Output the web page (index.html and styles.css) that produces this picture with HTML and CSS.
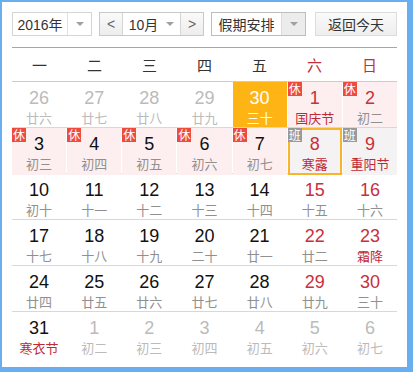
FILE: index.html
```html
<!DOCTYPE html>
<html lang="zh">
<head>
<meta charset="utf-8">
<link rel="stylesheet" href="styles.css">
</head>
<body>
<div class="cal">
  <div class="toolbar">
    <div class="sel year"><span class="sel-text">2016年</span><span class="sel-arrow"><i class="tri"></i></span></div>
    <div class="month">
      <span class="nav">&lt;</span>
      <span class="month-text">10月<i class="tri"></i></span>
      <span class="nav">&gt;</span>
    </div>
    <div class="sel holiday"><span class="sel-text">假期安排</span><span class="sel-arrow gray"><i class="tri"></i></span></div>
    <div class="today-btn">返回今天</div>
  </div>
  <div class="weekdays">
    <span>一</span><span>二</span><span>三</span><span>四</span><span>五</span><span class="we">六</span><span class="we">日</span>
  </div>
  <div class="grid">
    <div class="row">
      <div class="cell other"><b>26</b><small>廿六</small></div>
      <div class="cell other"><b>27</b><small>廿七</small></div>
      <div class="cell other"><b>28</b><small>廿八</small></div>
      <div class="cell other"><b>29</b><small>廿九</small></div>
      <div class="cell today"><b>30</b><small>三十</small></div>
      <div class="cell rest red"><i class="badge">休</i><b>1</b><small class="fest">国庆节</small></div>
      <div class="cell rest red"><i class="badge">休</i><b>2</b><small>初二</small></div>
    </div>
    <div class="row">
      <div class="cell rest"><i class="badge">休</i><b>3</b><small>初三</small></div>
      <div class="cell rest"><i class="badge">休</i><b>4</b><small>初四</small></div>
      <div class="cell rest"><i class="badge">休</i><b>5</b><small>初五</small></div>
      <div class="cell rest"><i class="badge">休</i><b>6</b><small>初六</small></div>
      <div class="cell rest"><i class="badge">休</i><b>7</b><small>初七</small></div>
      <div class="cell work red selected"><i class="badge">班</i><b>8</b><small class="fest">寒露</small></div>
      <div class="cell work red"><i class="badge">班</i><b>9</b><small class="fest">重阳节</small></div>
    </div>
    <div class="row">
      <div class="cell"><b>10</b><small>初十</small></div>
      <div class="cell"><b>11</b><small>十一</small></div>
      <div class="cell"><b>12</b><small>十二</small></div>
      <div class="cell"><b>13</b><small>十三</small></div>
      <div class="cell"><b>14</b><small>十四</small></div>
      <div class="cell red"><b>15</b><small>十五</small></div>
      <div class="cell red"><b>16</b><small>十六</small></div>
    </div>
    <div class="row">
      <div class="cell"><b>17</b><small>十七</small></div>
      <div class="cell"><b>18</b><small>十八</small></div>
      <div class="cell"><b>19</b><small>十九</small></div>
      <div class="cell"><b>20</b><small>二十</small></div>
      <div class="cell"><b>21</b><small>廿一</small></div>
      <div class="cell red"><b>22</b><small>廿二</small></div>
      <div class="cell red"><b>23</b><small class="fest">霜降</small></div>
    </div>
    <div class="row">
      <div class="cell"><b>24</b><small>廿四</small></div>
      <div class="cell"><b>25</b><small>廿五</small></div>
      <div class="cell"><b>26</b><small>廿六</small></div>
      <div class="cell"><b>27</b><small>廿七</small></div>
      <div class="cell"><b>28</b><small>廿八</small></div>
      <div class="cell red"><b>29</b><small>廿九</small></div>
      <div class="cell red"><b>30</b><small>三十</small></div>
    </div>
    <div class="row last">
      <div class="cell"><b>31</b><small class="fest">寒衣节</small></div>
      <div class="cell other"><b>1</b><small>初二</small></div>
      <div class="cell other"><b>2</b><small>初三</small></div>
      <div class="cell other"><b>3</b><small>初四</small></div>
      <div class="cell other"><b>4</b><small>初五</small></div>
      <div class="cell other"><b>5</b><small>初六</small></div>
      <div class="cell other"><b>6</b><small>初七</small></div>
    </div>
  </div>
</div>
</body>
</html>
```

FILE: styles.css
```css
html, body {
  margin: 0;
  padding: 0;
  background: #6aaef2;
  height: 372px;
  overflow: hidden;
}
.cal {
  box-sizing: border-box;
  margin: 2px 0 0 2px;
  width: 405px;
  height: 365px;
  background: #fff;
  padding: 10px;
  font-family: "Liberation Sans", "Noto Sans CJK SC", sans-serif;
  color: #000;
}
.toolbar {
  display: flex;
  height: 24px;
  font-family: "Liberation Sans", "Noto Sans CJK SC", sans-serif;
  font-size: 14px;
  color: #333;
}
.sel {
  box-sizing: border-box;
  display: flex;
  border: 1px solid #d5d5d5;
  background: #fff;
  height: 24px;
}
.sel-text {
  display: flex;
  align-items: center;
  justify-content: center;
  border-right: 1px solid #e2e2e2;
}
.sel-arrow {
  flex: 1;
  display: flex;
  align-items: center;
  justify-content: center;
}
.sel-arrow.gray {
  background: #ececec;
}
.tri {
  display: inline-block;
  width: 0;
  height: 0;
  border-left: 4px solid transparent;
  border-right: 4px solid transparent;
  border-top: 4px solid #a0a0a0;
}
.year {
  width: 80px;
}
.year .sel-text {
  width: 54px;
}
.month {
  box-sizing: border-box;
  margin-left: 7px;
  width: 105px;
  height: 24px;
  display: flex;
  border: 1px solid #c8c8c8;
}
.nav {
  width: 22px;
  display: flex;
  align-items: center;
  justify-content: center;
  background: linear-gradient(#fafafa, #ededed);
  color: #666;
  font-size: 14px;
}
.month-text {
  flex: 1;
  display: flex;
  align-items: center;
  justify-content: center;
  gap: 8px;
  border-left: 1px solid #d5d5d5;
  border-right: 1px solid #d5d5d5;
  background: #fff;
}
.holiday {
  margin-left: 7px;
  width: 95px;
  border-color: #bdbdbd;
}
.holiday .sel-text {
  width: 69px;
  border-right: 1px solid #dcdcdc;
}
.today-btn {
  box-sizing: border-box;
  margin-left: 9px;
  width: 82px;
  height: 24px;
  border: 1px solid #dcdcdc;
  background: linear-gradient(#fafafa, #eeeeee);
  display: flex;
  align-items: center;
  justify-content: center;
}
.weekdays {
  margin-top: 11px;
  border-top: 1px solid #74b2ea;
  border-bottom: 1px solid #cccccc;
  height: 33px;
  display: grid;
  grid-template-columns: repeat(7, 1fr);
  align-items: center;
  text-align: center;
  font-family: "Noto Sans CJK SC", sans-serif;
  font-size: 15px;
  color: #333;
}
.weekdays .we {
  color: #c2303a;
}
.row {
  display: grid;
  grid-template-columns: repeat(7, 1fr);
  column-gap: 1px;
  height: 45px;
  border-bottom: 1px solid #d8d8d8;
}
.row.last {
  border-bottom: none;
}
.cell {
  position: relative;
  box-sizing: border-box;
  display: flex;
  flex-direction: column;
  align-items: center;
  padding-top: 6px;
}
.cell b {
  font-weight: normal;
  font-size: 18px;
  line-height: 20px;
  font-family: "Liberation Sans", sans-serif;
  color: #111;
}
.cell small {
  font-family: "Noto Sans CJK SC", sans-serif;
  font-size: 13px;
  line-height: 18px;
  color: #909090;
  margin-top: 1px;
}
.cell.red b {
  color: #c9303a;
}
.cell small.fest {
  color: #c02a35;
}
.cell.other b,
.cell.other small {
  color: #bbbbbb;
}
.cell.today {
  background: #fdb414;
}
.cell.today b,
.cell.today small {
  color: #fff;
}
.cell.rest {
  background: #fdefef;
}
.cell.work {
  background: #f4f2f2;
}
.cell.selected {
  border: 2px solid #f8b52a;
  padding-top: 4px;
}
.badge {
  position: absolute;
  top: 0;
  left: 0;
  width: 14px;
  height: 14px;
  background: #ee4a3e;
  color: #fff;
  font-style: normal;
  font-family: "Noto Sans CJK SC", sans-serif;
  font-size: 12px;
  line-height: 14px;
  text-align: center;
}
.cell.work .badge {
  background: #999999;
}
.cell.selected .badge {
  top: -2px;
  left: -2px;
}
```
